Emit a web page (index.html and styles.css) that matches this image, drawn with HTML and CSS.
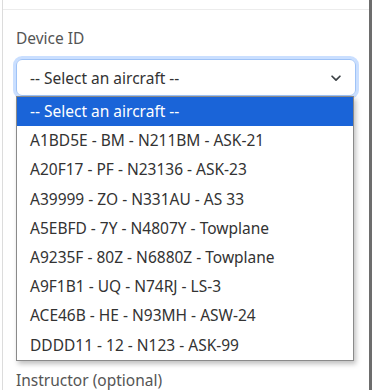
FILE: index.html
```html
<!DOCTYPE html>
<html lang="en">
<head>
  <meta charset="UTF-8" />
  <meta name="viewport" content="width=device-width, initial-scale=1.0"/>
  <title>Log Flight</title>
  <link rel="stylesheet" href="styles.css">
</head>
<body>
  <div class="frame">
    <div class="card">
      <div class="card-header"></div>
      <div class="card-body">
        <div class="field">
          <label class="form-label">Device ID</label>
          <div class="select-wrap">
            <div class="form-select">
              <span>-- Select an aircraft --</span>
              <svg class="chevron" width="14" height="14" viewBox="0 0 16 16">
                <path d="M3.5 6l4.5 4.5 4.5-4.5" fill="none" stroke="#3c4246" stroke-width="2" stroke-linecap="round" stroke-linejoin="round"/>
              </svg>
            </div>
            <ul class="options">
              <li class="active">-- Select an aircraft --</li>
              <li>A1BD5E - BM - N211BM - ASK-21</li>
              <li>A20F17 - PF - N23136 - ASK-23</li>
              <li>A39999 - ZO - N331AU - AS 33</li>
              <li>A5EBFD - 7Y - N4807Y - Towplane</li>
              <li>A9235F - 80Z - N6880Z - Towplane</li>
              <li>A9F1B1 - UQ - N74RJ - LS-3</li>
              <li>ACE46B - HE - N93MH - ASW-24</li>
              <li>DDDD11 - 12 - N123 - ASK-99</li>
            </ul>
          </div>
        </div>
        <div class="field covered"></div>
        <div class="field">
          <label class="form-label">Instructor (optional)</label>
        </div>
      </div>
    </div>
  </div>
</body>
</html>
```

FILE: styles.css
```css
* { box-sizing: border-box; }

body {
  margin: 0;
  padding: 0;
  background: #fff;
  font-family: 'Noto Sans', 'Open Sans', sans-serif;
  color: #212529;
  overflow: hidden;
}

.frame {
  width: 372px;
  height: 390px;
  border-right: 3px solid #6d6d6d;
  padding-left: 2px;
}

.card {
  height: 100%;
  border-left: 1px solid #dcdcdc;
}

.card-header {
  height: 10px;
  border-bottom: 1px solid #ececec;
}

.card-body {
  padding: 16px 13px 0 13px;
}

.form-label {
  display: block;
  font-size: 15.5px;
  line-height: 24px;
  color: #555;
  margin-bottom: 9px;
}

.select-wrap {
  position: relative;
}

.form-select {
  display: flex;
  align-items: center;
  justify-content: space-between;
  height: 37px;
  padding: 0 12px 0 13px;
  border: 1px solid #9fc3f7;
  border-radius: 6px;
  box-shadow: 0 0 0 3px rgba(13, 110, 253, 0.22);
  font-size: 15.5px;
  color: #333;
}

.chevron {
  display: block;
}

.options {
  position: absolute;
  top: 37px;
  left: 0;
  width: 338px;
  margin: 0;
  padding: 0;
  list-style: none;
  background: #fff;
  border: 1px solid #8a8a8a;
  box-shadow: 2px 3px 5px rgba(0, 0, 0, 0.25);
  z-index: 2;
}

.options li {
  height: 29.2px;
  line-height: 29px;
  padding-left: 13px;
  font-size: 15.5px;
  color: #333;
  white-space: nowrap;
}

.options li.active {
  background: #1a64d8;
  color: #fff;
}

.covered {
  height: 272px;
}
```
